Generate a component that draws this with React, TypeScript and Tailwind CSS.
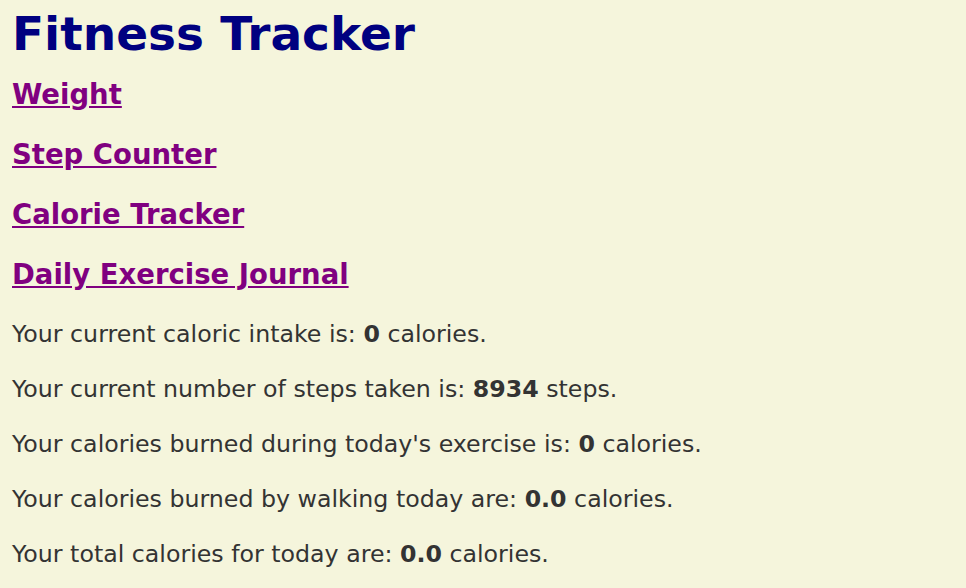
const links = ['Weight', 'Step Counter', 'Calorie Tracker', 'Daily Exercise Journal']

const stats = [
  { before: 'Your current caloric intake is: ', value: '0', after: ' calories.' },
  { before: 'Your current number of steps taken is: ', value: '8934', after: ' steps.' },
  { before: "Your calories burned during today's exercise is: ", value: '0', after: ' calories.' },
  { before: 'Your calories burned by walking today are: ', value: '0.0', after: ' calories.' },
  { before: 'Your total calories for today are: ', value: '0.0', after: ' calories.' },
]

export default function App() {
  return (
    <div
      className="min-h-screen bg-[#f5f5dc] px-3 pt-2 text-[#333]"
      style={{ fontFamily: "'DejaVu Sans', Verdana, sans-serif" }}
    >
      {/* Title */}
      <h1 className="text-[47px] leading-[52px] font-bold text-[#000080]">Fitness Tracker</h1>

      {/* Nav links */}
      <nav className="mt-[4px] flex flex-col">
        {links.map((l) => (
          <h3 key={l} className="text-[27.5px] leading-[60px] font-bold">
            <a href="#" className="text-[#800080] underline">
              {l}
            </a>
          </h3>
        ))}
      </nav>

      {/* Daily stats */}
      <div className="mt-[3px] flex flex-col">
        {stats.map((s) => (
          <p key={s.before} className="text-[23.7px] leading-[55px]">
            {s.before}
            <b>{s.value}</b>
            {s.after}
          </p>
        ))}
      </div>
    </div>
  )
}
